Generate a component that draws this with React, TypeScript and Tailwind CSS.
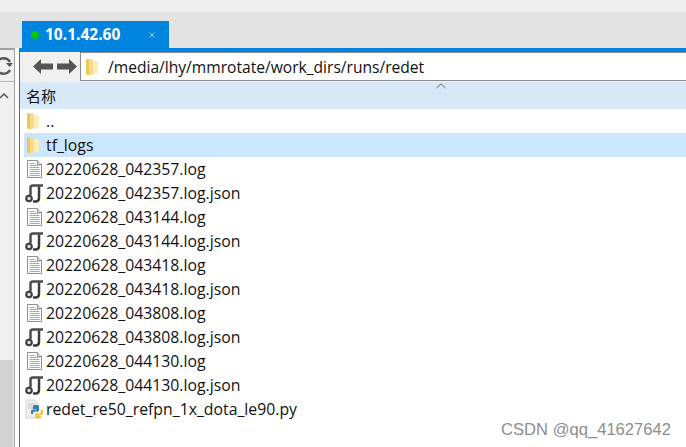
import { X } from 'lucide-react';

const rows = [
  { name: '20220628_042357.log', type: 'log' },
  { name: '20220628_042357.log.json', type: 'json' },
  { name: '20220628_043144.log', type: 'log' },
  { name: '20220628_043144.log.json', type: 'json' },
  { name: '20220628_043418.log', type: 'log' },
  { name: '20220628_043418.log.json', type: 'json' },
  { name: '20220628_043808.log', type: 'log' },
  { name: '20220628_043808.log.json', type: 'json' },
  { name: '20220628_044130.log', type: 'log' },
  { name: '20220628_044130.log.json', type: 'json' },
  { name: 'redet_re50_refpn_1x_dota_le90.py', type: 'py' },
];

function FolderIcon() {
  return (
    <svg width="13" height="18" viewBox="0 0 13 18" className="shrink-0">
      <path d="M0 1h6l1.500 2H12v12.500L4 17H1z" fill="#f8dc8c" />
      <path d="M7 3h5v12.500L7 16.500z" fill="#fdeeb8" />
      <path d="M0 1l3 1v15H1L0 16z" fill="#eec65c" />
    </svg>
  );
}

function LogIcon() {
  return (
    <svg width="15" height="18" viewBox="0 0 15 18" className="shrink-0 ml-[2px]">
      <path d="M.5.5h10l4 4v13H.5z" fill="#fff" stroke="#8f8f8f" />
      <path d="M10.500.5v4h4" fill="#e4e4e4" stroke="#8f8f8f" />
      <path d="M2.500 3.500h6M2.500 5.500h10M2.500 7.500h10M2.500 9.500h10M2.500 11.500h10M2.500 13.500h10M2.500 15.500h10" stroke="#a8a8a8" />
    </svg>
  );
}

function JsonIcon() {
  return (
    <svg width="19" height="19" viewBox="0 0 19 19" className="shrink-0">
      <path d="M5.500 11V3.500Q5.500 1.500 8 1.500H18" fill="none" stroke="#4c4c4c" strokeWidth="2.500" />
      <path d="M14 2.500V14Q14 17.500 10.500 17.500H8" fill="none" stroke="#3c3c3c" strokeWidth="2.500" />
      <circle cx="4" cy="14.500" r="2.800" fill="#ddd" stroke="#3c3c3c" strokeWidth="2" />
    </svg>
  );
}

function PyIcon() {
  return (
    <svg width="19" height="20" viewBox="0 0 19 20" className="shrink-0">
      <path d="M1 1h9l3 3v15H1z" fill="#eceef0" stroke="#d4d4d4" />
      <path d="M3 5h7M3 7h7M3 9h5" stroke="#c4c8cc" />
      <path d="M6 15v-3q0-1.500 1.500-1.500h4V10H8V7.500Q8 6 9.500 6h3Q14 6 14 7.500V11q0 1.500-1.500 1.500h-3Q8 12.500 8 14v1z" fill="#3f79ad" />
      <path d="M18 11v3.500q0 1.500-1.500 1.500H14v.500h2V18q0 1.500-1.500 1.500h-3Q10 19.500 10 18v-2q0-1.500 1.500-1.500H15q.500 0 .500-1V11z" fill="#f4c63f" />
    </svg>
  );
}

function RowIcon({ type }: { type: string }) {
  if (type === 'log') return <LogIcon />;
  if (type === 'json') return <JsonIcon />;
  return <PyIcon />;
}

export default function App() {
  return (
    <div className="relative w-[686px] h-[447px] overflow-hidden bg-white flex flex-col font-['Open_Sans','Noto_Sans',sans-serif] text-[#111]">
      <div className="h-3 bg-[#eeeeee]" />
      {/* Tab strip */}
      <div className="h-9 bg-[#e3e3e3] flex items-end pl-[22px]">
        <div className="w-[147px] h-[27px] bg-[#0084e0] flex items-center pl-[9px] pr-[13px] text-white">
          <span className="w-2 h-2 rounded-full bg-[#0ac40a]" />
          <span className="ml-[6px] pt-[1px] text-[15.5px] font-bold leading-none">10.1.42.60</span>
          <X size={8} strokeWidth={2} className="ml-auto" />
        </div>
      </div>

      <div className="flex-1 flex min-h-0">
        {/* Left edge of the neighbouring panel */}
        <div className="w-[15px] flex flex-col bg-[#f0f0f0] border-r border-[#a0a0a0] border-t-2 border-t-[#a0a0a0] overflow-hidden">
          <div className="h-[32px] border-b border-[#b5b5b5] relative">
            <svg width="14" height="22" viewBox="0 0 14 22" className="absolute left-0 top-[5px]">
              <path d="M-3 7a7.500 7.500 0 0 1 13 0M10 15a7.500 7.500 0 0 1-13 0" fill="none" stroke="#555" strokeWidth="2.500" />
              <path d="M6 8h7l-3.500 4z" fill="#555" />
            </svg>
          </div>
          <div className="h-[278px] pt-[11px]">
            <svg width="10" height="6" viewBox="0 0 10 6">
              <path d="M0 5l4-4 4 4" fill="none" stroke="#555" strokeWidth="1.500" />
            </svg>
          </div>
          <div className="flex-1 bg-[#d2d2d2] mr-[1px]" />
        </div>
        <div className="w-1 bg-white" />

        {/* File pane */}
        <div className="flex-1 flex flex-col min-w-0 border-l border-[#0084e0]">
          <div className="h-1 bg-[#0084e0] -ml-px" />
          <div className="h-[29px] bg-[#f0f0f0] flex items-stretch pl-[13px]">
            <div className="w-[47px] flex items-center gap-[4px]">
              <svg width="20" height="15" viewBox="0 0 20 15">
                <path d="M0 7.500L8 0v4.500h12v6H8V15z" fill="#555" />
              </svg>
              <svg width="20" height="15" viewBox="0 0 20 15">
                <path d="M20 7.500L12 0v4.500H0v6h12V15z" fill="#555" />
              </svg>
            </div>
            <div className="flex-1 bg-white border-y-[1.500px] border-l-[1.500px] border-[#8c8c8c] flex items-center pl-[5px]">
              <FolderIcon />
              <span className="ml-[9px] pt-[2px] text-[15.6px] leading-none">/media/lhy/mmrotate/work_dirs/runs/redet</span>
            </div>
          </div>
          <div className="h-[28px] bg-[#d7e8f8] relative flex items-center pl-[6px] border-t border-[#f0f0f0]">
            <span className="text-[15px] leading-none font-['Noto_Sans_CJK_SC',sans-serif]">名称</span>
            <svg width="10" height="6" viewBox="0 0 10 6" className="absolute left-[416px] top-[1px]">
              <path d="M.5 5l4.500-4 4.500 4" fill="none" stroke="#6b6b6b" />
            </svg>
          </div>
          <div className="flex flex-col pl-1">
            <div className="h-6 flex items-center pl-[3px] gap-[6px]">
              <FolderIcon />
              <span className="pt-[2px] text-[15.8px] leading-none">..</span>
            </div>
            <div className="h-6 flex items-center pl-[3px] gap-[6px] bg-[#cce6ff]">
              <FolderIcon />
              <span className="pt-[2px] text-[15.8px] leading-none">tf_logs</span>
            </div>
            {rows.map((r) => (
              <div key={r.name} className="h-6 flex items-center">
                <div className="w-[22px] pl-[1px] flex justify-start">
                  <RowIcon type={r.type} />
                </div>
                <span className="pt-[2px] text-[15.8px] leading-none">{r.name}</span>
              </div>
            ))}
          </div>
        </div>
      </div>

      {/* Watermark */}
      <div className="absolute left-[501px] top-[422px] text-[16.6px] leading-none text-[#8e8e8e] font-['Liberation_Sans',sans-serif]">
        CSDN @qq_41627642
      </div>
    </div>
  );
}
